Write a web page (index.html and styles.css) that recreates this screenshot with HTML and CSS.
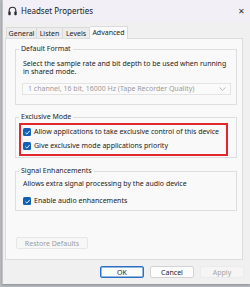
FILE: index.html
```html
<!DOCTYPE html>
<html lang="en">
<head>
  <meta charset="UTF-8">
  <title>Headset Properties</title>
  <link rel="stylesheet" href="styles.css">
</head>
<body>
  <div class="window">
    <div class="titlebar">
      <svg class="app-icon" width="9" height="10" viewBox="0 0 9 10">
        <path d="M1.2 6.5 V4.6 A3.3 3.3 0 0 1 7.8 4.6 V6.5" fill="none" stroke="#2b2b2b" stroke-width="1.1"/>
        <rect x="0.3" y="5.6" width="2.4" height="3.6" rx="0.8" fill="#2b2b2b"/>
        <rect x="6.3" y="5.6" width="2.4" height="3.6" rx="0.8" fill="#2b2b2b"/>
      </svg>
      <span class="title">Headset Properties</span>
      <span class="close">✕</span>
    </div>

    <div class="tabs">
      <div class="tab tab-general">General</div>
      <div class="tab tab-listen">Listen</div>
      <div class="tab tab-levels">Levels</div>
      <div class="tab tab-advanced active">Advanced</div>
    </div>

    <div class="pane">
      <fieldset class="group group-format">
        <legend>Default Format</legend>
        <p class="hint">Select the sample rate and bit depth to be used when running<br>in shared mode.</p>
        <div class="select">
          <span>1 channel, 16 bit, 16000 Hz (Tape Recorder Quality)</span>
          <svg width="7" height="4" viewBox="0 0 7 4"><path d="M0.5 0.5 L3.5 3.3 L6.5 0.5" fill="none" stroke="#a8a8a8" stroke-width="0.8"/></svg>
        </div>
      </fieldset>

      <fieldset class="group group-exclusive">
        <legend>Exclusive Mode</legend>
        <div class="highlight">
          <label class="check"><span class="box"><svg width="7" height="7" viewBox="0 0 7 7"><path d="M1.4 3.7 L2.9 5.1 L5.7 1.9" fill="none" stroke="#fff" stroke-width="0.9"/></svg></span>Allow applications to take exclusive control of this device</label>
          <label class="check"><span class="box"><svg width="7" height="7" viewBox="0 0 7 7"><path d="M1.4 3.7 L2.9 5.1 L5.7 1.9" fill="none" stroke="#fff" stroke-width="0.9"/></svg></span>Give exclusive mode applications priority</label>
        </div>
      </fieldset>

      <fieldset class="group group-signal">
        <legend>Signal Enhancements</legend>
        <p class="hint">Allows extra signal processing by the audio device</p>
        <label class="check"><span class="box"><svg width="7" height="7" viewBox="0 0 7 7"><path d="M1.4 3.7 L2.9 5.1 L5.7 1.9" fill="none" stroke="#fff" stroke-width="0.9"/></svg></span>Enable audio enhancements</label>
      </fieldset>

      <button class="btn restore" disabled>Restore Defaults</button>
    </div>

    <div class="actions">
      <button class="btn ok">OK</button>
      <button class="btn cancel">Cancel</button>
      <button class="btn apply" disabled>Apply</button>
    </div>
  </div>
</body>
</html>
```

FILE: styles.css
```css
body {
  margin: 0;
  background: #b7bbc0;
  font-family: 'Noto Sans', 'Open Sans', Arial, sans-serif;
  font-size: 7px;
  line-height: 8px;
  color: #1b1b1b;
  height: 287px;
  overflow: hidden;
}

.window {
  margin-left: 2px;
  height: 284px;
  background: #f0f0f0;
  border-left: 1px solid #c4c4c4;
  box-shadow: 0 1px 2px rgba(0, 0, 0, 0.25);
  box-sizing: border-box;
}

.titlebar {
  height: 22px;
  background: #f2eff6;
  display: flex;
  align-items: center;
  padding-left: 5px;
}

.app-icon {
  margin-right: 4px;
}

.title {
  font-size: 8px;
  color: #1a1a1a;
}

.close {
  margin-left: auto;
  margin-right: 5px;
  font-size: 8px;
  color: #333;
}

.tabs {
  display: flex;
  align-items: flex-end;
  height: 13px;
  margin-top: 3px;
  padding-left: 3px;
}

.tab {
  height: 11px;
  line-height: 11px;
  text-align: center;
  background: #ececec;
  border: 1px solid #dadada;
  border-bottom: none;
  box-sizing: border-box;
  color: #222;
}

.tab-general { width: 31px; }
.tab-listen { width: 26px; border-left: none; }
.tab-levels { width: 27px; border-left: none; }

.tab-advanced {
  width: 38px;
  height: 13px;
  line-height: 12px;
  background: #fbfbfb;
  border-left: none;
  position: relative;
  top: 1px;
}

.pane {
  margin-left: 2px;
  width: 238px;
  height: 222px;
  background: #f9f9f9;
  border: 1px solid #dcdcdc;
  box-sizing: border-box;
  padding: 6px 5px 0 9px;
}

.group {
  margin: 0;
  border: 1px solid #dedede;
  padding: 0 5px 0 3px;
}

.group legend {
  padding: 0 2px;
  margin-left: 0;
  height: 8px;
  color: #1e1e1e;
}

.hint {
  margin: 0 0 0 4px;
  color: #222;
}

.group-format {
  padding-top: 7px;
  padding-bottom: 9px;
}

.select {
  margin: 7px 0 0 3px;
  height: 12px;
  border: 1px solid #e4e4e4;
  background: #fafafa;
  box-sizing: border-box;
  display: flex;
  align-items: center;
  justify-content: space-between;
  padding: 0 4px 0 5px;
  color: #9a9a9a;
}

.group-exclusive {
  margin-top: 8px;
  padding: 2px 8px 1px 3px;
}

.highlight {
  border: 2px solid #e3262c;
  padding: 2px 0 3px 2px;
  display: flex;
  flex-direction: column;
  gap: 4px;
}

.check {
  display: flex;
  align-items: center;
  height: 10px;
  gap: 3px;
}

.box {
  width: 8px;
  height: 8px;
  border-radius: 1.5px;
  background: #1160b8;
  display: flex;
  align-items: center;
  justify-content: center;
}

.group-signal {
  margin-top: 9px;
  padding: 5px 7px 4px 3px;
}

.group-signal .check {
  margin: 8px 0 0 4px;
}

.btn {
  font-family: inherit;
  font-size: 7px;
  height: 12px;
  padding: 0;
  border-radius: 2px;
  box-sizing: border-box;
}

.restore {
  margin-top: 26px;
  margin-left: 1px;
  width: 72px;
  background: #f7f7f7;
  border: 1px solid #e6e6e6;
  color: #9c9c9c;
}

.actions {
  display: flex;
  gap: 6px;
  padding-left: 97px;
  margin-top: 6px;
}

.actions .btn {
  width: 44px;
}

.ok {
  background: #fdfdfd;
  border: 1px solid #2a6fc4;
  box-shadow: inset 0 0 0 0.5px #2a6fc4;
  color: #1a1a1a;
}

.cancel {
  background: #fdfdfd;
  border: 1px solid #d2d2d2;
  color: #1a1a1a;
}

.apply {
  background: #f5f5f5;
  border: 1px solid #ebebeb;
  color: #a4a4a4;
}
```
